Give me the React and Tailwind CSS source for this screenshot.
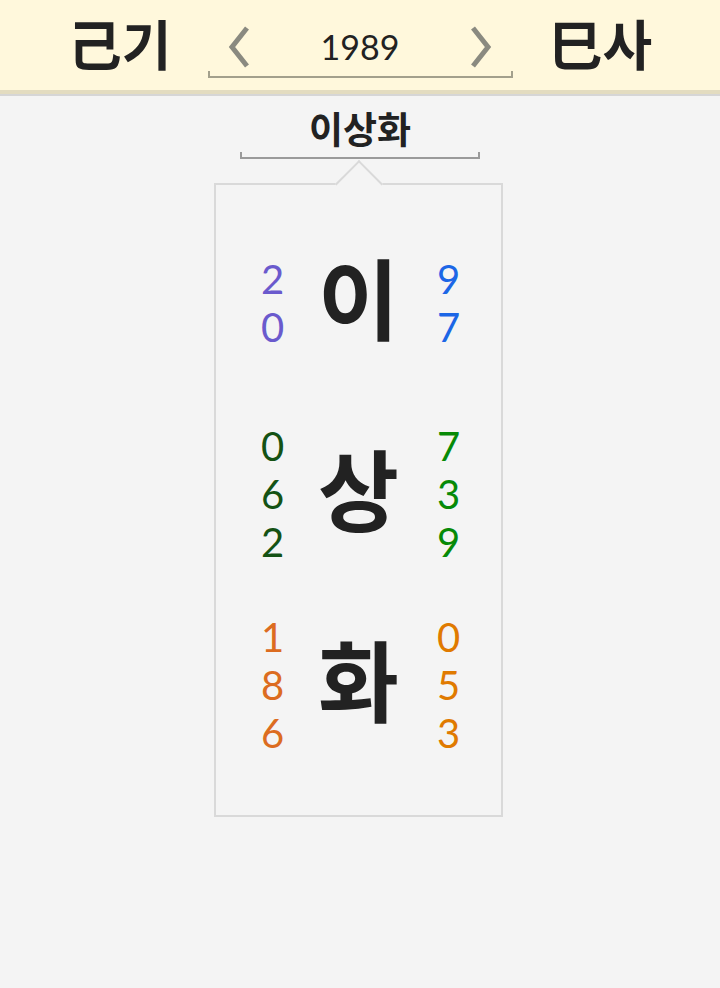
const rows = [
  { ch: '이', left: ['2', '0'], right: ['9', '7'], lc: 'text-[#6a5acd]', rc: 'text-[#1c66e6]' },
  { ch: '상', left: ['0', '6', '2'], right: ['7', '3', '9'], lc: 'text-[#145214]', rc: 'text-[#078a07]' },
  { ch: '화', left: ['1', '8', '6'], right: ['0', '5', '3'], lc: 'text-[#dc6c20]', rc: 'text-[#e07a00]' },
];

const font = { fontFamily: '"Noto Sans CJK KR", "Noto Sans", sans-serif' };
const digitFont = { fontFamily: 'Lato, "Noto Sans", sans-serif' };

const Chevron = ({ dir }) => (
  <svg width="26" height="44" viewBox="0 0 26 44" fill="none">
    <path
      d={dir === 'left' ? 'M21 3L6 22l15 19' : 'M5 3l15 19L5 41'}
      stroke="#8a8a80"
      strokeWidth="5"
    />
  </svg>
);

const Digits = ({ items, color }) => (
  <div className={`flex flex-col items-center text-[40px] leading-[48px] ${color}`} style={digitFont}>
    {items.map((d, i) => (
      <div key={i} className="h-[48px]">{d}</div>
    ))}
  </div>
);

export default function App() {
  return (
    <div className="min-h-[988px] bg-[#f4f4f4] text-[#222]" style={font}>
      {/* header */}
      <header className="h-[94px] bg-[#fff8dc] border-b-4 border-[#e3dcc0] shadow-[0_2px_0_#d6d6d6] flex items-center justify-center gap-[36px]">
        <div className="text-[54px] font-bold leading-none pb-1">己기</div>
        <div className="w-[305px] mt-[10px] flex flex-col">
          <div className="h-[48px] flex items-center justify-between px-[18px]">
            <Chevron dir="left" />
            <span className="text-[34px] leading-none" style={digitFont}>1989</span>
            <Chevron dir="right" />
          </div>
          <div className="h-[7px] border-x-2 border-b-2 border-[#a3a08c]" />
        </div>
        <div className="text-[54px] font-bold leading-none pb-1">巳사</div>
      </header>

      {/* name */}
      <div className="flex flex-col items-center pt-[10px]">
        <div className="text-[37px] font-bold leading-[48px]">이상화</div>
        <div className="w-[240px] h-[7px] border-x-2 border-b-2 border-[#9a9a9a]" />

        <div className="relative mt-[24px] -ml-[3px] w-[289px] h-[634px] border-2 border-[#d9d9d9] pt-[22px]">
          <div className="absolute left-1/2 -top-[18px] -ml-[17px] w-[34px] h-[34px] rotate-45 bg-[#f4f4f4] border-t-2 border-l-2 border-[#d9d9d9]" />
          {rows.map((r) => (
            <div key={r.ch} className="h-[191px] grid grid-cols-[40px_132px_40px] items-center justify-center">
              <Digits items={r.left} color={r.lc} />
              <div className="text-center text-[88px] font-bold leading-none pb-[16px]">{r.ch}</div>
              <div className="pl-2">
                <Digits items={r.right} color={r.rc} />
              </div>
            </div>
          ))}
        </div>
      </div>
    </div>
  );
}
